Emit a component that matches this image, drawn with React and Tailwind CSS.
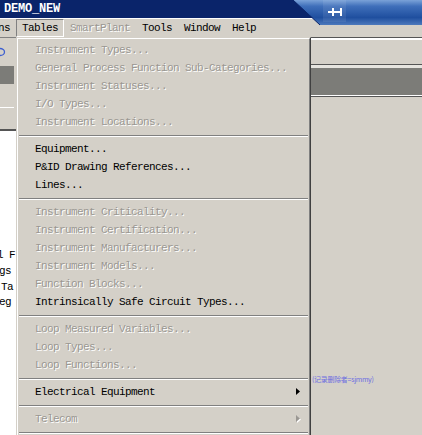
import React from 'react'

const MONO = "font-['Liberation_Mono','Noto_Sans_CJK_SC',monospace]"

const groups = [
  [
    { label: 'Instrument Types...', disabled: true },
    { label: 'General Process Function Sub-Categories...', disabled: true },
    { label: 'Instrument Statuses...', disabled: true },
    { label: 'I/O Types...', disabled: true },
    { label: 'Instrument Locations...', disabled: true },
  ],
  [
    { label: 'Equipment...' },
    { label: 'P&ID Drawing References...' },
    { label: 'Lines...' },
  ],
  [
    { label: 'Instrument Criticality...', disabled: true },
    { label: 'Instrument Certification...', disabled: true },
    { label: 'Instrument Manufacturers...', disabled: true },
    { label: 'Instrument Models...', disabled: true },
    { label: 'Function Blocks...', disabled: true },
    { label: 'Intrinsically Safe Circuit Types...' },
  ],
  [
    { label: 'Loop Measured Variables...', disabled: true },
    { label: 'Loop Types...', disabled: true },
    { label: 'Loop Functions...', disabled: true },
  ],
  [{ label: 'Electrical Equipment', arrow: true }],
  [{ label: 'Telecom', disabled: true, arrow: true }],
  [{ label: '', disabled: true }],
]

const disabledText = 'text-[#9a9792] [text-shadow:1px_1px_0_#ffffff]'

function Item({ label, disabled, arrow }) {
  return (
    <div className="h-[18px] flex items-center pl-[16px]">
      <span className={`whitespace-pre ${disabled ? disabledText : 'text-black'}`}>{label}</span>
      {arrow && (
        <svg width="5" height="8" viewBox="0 0 5 8" className="ml-auto mr-[7px]">
          {disabled && <path d="M1 1 L5 4.5 L1 8 Z" fill="#ffffff" />}
          <path d="M0 0 L4 3.5 L0 7 Z" fill={disabled ? '#9a9792' : '#000000'} />
        </svg>
      )}
    </div>
  )
}

function Separator() {
  return (
    <div className="h-[9px] flex flex-col justify-center">
      <div className="h-px bg-[#808080]" />
      <div className="h-px bg-white" />
    </div>
  )
}

function TitleDecoration() {
  return (
    <svg width="142" height="26" viewBox="0 0 142 26" className="absolute top-0 right-0">
      <defs>
        <linearGradient id="tb" x1="0" y1="0" x2="0" y2="1">
          <stop offset="0" stopColor="#7aa2d8" />
          <stop offset="0.25" stopColor="#3f6fba" />
          <stop offset="0.7" stopColor="#1f4f9f" />
          <stop offset="1" stopColor="#4c78bc" />
        </linearGradient>
      </defs>
      <polygon points="13,0 142,0 142,25 40,25" fill="url(#tb)" />
      <line x1="13" y1="0" x2="40" y2="25" stroke="#0a246a" strokeWidth="1" />
      <rect x="43" y="0" width="23" height="22" fill="#ffffff" opacity="0.08" />
      <rect x="48" y="11" width="4" height="2" fill="#ffffff" />
      <rect x="52" y="8" width="2" height="8" fill="#ffffff" />
      <rect x="54" y="11" width="6" height="2" fill="#ffffff" />
      <rect x="60" y="8" width="2" height="8" fill="#ffffff" />
    </svg>
  )
}

function MenuBarItem({ children, pressed, disabled, className = '' }) {
  return (
    <div
      className={`h-[18px] px-[5px] flex items-center border ${
        pressed ? 'border-t-[#808080] border-l-[#808080] border-b-white border-r-white' : 'border-transparent'
      } ${className}`}
    >
      <span className={disabled ? disabledText : 'text-black'}>{children}</span>
    </div>
  )
}

export default function App() {
  return (
    <div
      className={`relative w-[422px] h-[435px] overflow-hidden bg-[#d4d0c8] ${MONO} text-[11px] tracking-[-0.6px] leading-none`}
    >
      {/* title bar */}
      <div className="h-[18px] bg-[#0a246a] flex items-center pl-[4px]">
        <span className="text-white font-bold text-[12px] tracking-[-0.2px]">DEMO_NEW</span>
      </div>

      {/* menu bar */}
      <div className="h-[19px] flex items-center border-t border-white">
        <MenuBarItem className="ml-[-8px]">ns</MenuBarItem>
        <MenuBarItem pressed>Tables</MenuBarItem>
        <MenuBarItem disabled>SmartPlant</MenuBarItem>
        <MenuBarItem>Tools</MenuBarItem>
        <MenuBarItem>Window</MenuBarItem>
        <MenuBarItem>Help</MenuBarItem>
      </div>

      <TitleDecoration />

      {/* window contents behind the menu */}
      <div className="flex h-[398px]">
        <div className="w-[16px] flex flex-col">
          <div className="h-[29px] border-t border-[#808080] relative">
            <svg width="6" height="10" viewBox="0 0 6 10" className="absolute left-0 top-[9px]">
              <ellipse cx="0" cy="5" rx="4.5" ry="3.5" fill="none" stroke="#3d5fd0" strokeWidth="1.3" />
            </svg>
          </div>
          <div className="h-[18px] w-[14px] bg-[#7c7c78]" />
          <div className="h-[24px] w-[14px] border-b border-white" />
          <div className="h-[23px] border-b-2 border-[#555555]" />
          <div className="flex-1 bg-white overflow-hidden">
            <div className="h-[117px]" />
            <div className="flex flex-col text-black text-[11px]">
              <div className="h-[15px] flex items-center ml-[-3px] whitespace-pre">l F</div>
              <div className="h-[16px] flex items-center ml-[-1px] whitespace-pre">gs</div>
              <div className="h-[16px] flex items-center ml-[1px] whitespace-pre">Ta</div>
              <div className="h-[15px] flex items-center ml-[-1px] whitespace-pre">eg</div>
            </div>
          </div>
        </div>
        <div className="w-[295px]" />
        <div className="flex-1 flex flex-col">
          <div className="h-[3px] border-t border-[#555555] border-b-2 border-b-white" />
          <div className="h-[24px]" />
          <div className="h-px bg-[#555555]" />
          <div className="h-[3px] bg-[#e6e4df]" />
          <div className="h-[27px] bg-[#7c7c78]" />
          <div className="h-px bg-white" />
          <div className="h-px bg-[#555555]" />
          <div className="h-[279px]" />
          <div className="pl-[1px] text-[7px] tracking-[-0.3px] text-[#6d6de0] font-['Noto_Sans_CJK_SC',sans-serif] whitespace-nowrap">
            (记录删除者=sjmmy)
          </div>
        </div>
      </div>

      {/* Tables dropdown */}
      <div className="absolute left-[16px] top-[37px] w-[295px] border-t border-l border-t-[#d4d0c8] border-l-[#d4d0c8] border-b border-r border-b-[#404040] border-r-[#404040]">
        <div className="border-t border-l border-t-white border-l-white border-b border-r border-b-[#808080] border-r-[#808080] pt-[2px] pb-px px-px bg-[#d4d0c8]">
          {groups.map((g, i) => (
            <div key={i}>
              {i > 0 && <Separator />}
              {g.map((it, j) => (
                <Item key={j} {...it} />
              ))}
            </div>
          ))}
        </div>
      </div>
    </div>
  )
}
